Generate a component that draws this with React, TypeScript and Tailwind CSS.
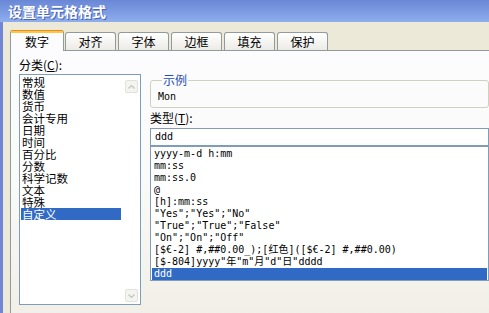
import React from "react";

const CATEGORIES = [
  "常规",
  "数值",
  "货币",
  "会计专用",
  "日期",
  "时间",
  "百分比",
  "分数",
  "科学记数",
  "文本",
  "特殊",
  "自定义",
];

const FORMATS = [
  "yyyy-m-d h:mm",
  "mm:ss",
  "mm:ss.0",
  "@",
  "[h]:mm:ss",
  '"Yes";"Yes";"No"',
  '"True";"True";"False"',
  '"On";"On";"Off"',
  "[$€-2] #,##0.00_);[红色]([$€-2] #,##0.00)",
  '[$-804]yyyy"年"m"月"d"日"dddd',
  "ddd",
];

const TABS = ["数字", "对齐", "字体", "边框", "填充", "保护"];

const cjk = "font-['Noto_Sans_CJK_SC','Noto_Sans',sans-serif]";
const mono = "font-['DejaVu_Sans_Mono','Noto_Sans_CJK_SC',monospace] text-[10px]";

function ScrollButton({ up }: { up?: boolean }) {
  return (
    <div className="w-[13px] h-[13px] rounded-[2px] border border-[#E2E2DA] bg-[#F4F4F0] flex items-center justify-center">
      <svg width="7" height="4" viewBox="0 0 7 4">
        <path
          d={up ? "M0.5 3.5 L3.5 0.5 L6.5 3.5" : "M0.5 0.5 L3.5 3.5 L6.5 0.5"}
          fill="none"
          stroke="#C9C9C0"
          strokeWidth="1.4"
        />
      </svg>
    </div>
  );
}

export default function App() {
  return (
    <div className={`w-[489px] h-[313px] overflow-hidden flex flex-col bg-[#ECE9D8] ${cjk}`}>
      {/* Title bar */}
      <div className="h-[22px] shrink-0 bg-gradient-to-b from-[#6A87D6] via-[#7B9AE2] to-[#8EAEEE] flex items-center pl-[8px]">
        <span className="text-white font-bold text-[14px] leading-none [text-shadow:1px_1px_0_#4A63B0]">
          设置单元格格式
        </span>
      </div>

      <div className="flex flex-1 min-h-0">
        {/* window frame */}
        <div className="w-[3px] shrink-0 bg-[#7186D6]" />

        <div className="flex-1 flex flex-col pl-[7px] pt-[8px] min-w-0">
          {/* Tabs */}
          <div className="flex items-end h-[21px] shrink-0 relative z-10">
            {TABS.map((t, i) =>
              i === 0 ? (
                <div
                  key={t}
                  className="w-[54px] h-[21px] mr-[1px] bg-[#FCFCFE] border-x border-[#919B9C] rounded-t-[3px] flex flex-col"
                >
                  <div className="h-[1px] bg-[#E68B2C] rounded-t-[3px]" />
                  <div className="h-[2px] bg-[#FFC73C]" />
                  <div className="flex-1 flex items-center justify-center text-[12px] leading-none text-black pb-[1px]">
                    {t}
                  </div>
                </div>
              ) : (
                <div
                  key={t}
                  className="w-[51px] h-[18px] mr-[2px] mb-[1px] border-x border-t border-[#919B9C] rounded-t-[3px] bg-gradient-to-b from-[#FFFFFF] to-[#ECEBE6] flex items-center justify-center text-[12px] leading-none text-black"
                >
                  {t}
                </div>
              )
            )}
          </div>

          {/* Panel */}
          <div className="flex-1 -mt-[1px] border-l border-t border-[#919B9C] bg-gradient-to-b from-[#FCFCFE] via-[#FAFAF8] to-[#F1EFE7] flex pl-[8px] pt-[6px]">
            {/* Left: category */}
            <div className="w-[122px] shrink-0 flex flex-col">
              <div className="h-[16px] text-[12px] leading-[16px] text-black">
                分类(<u>C</u>):
              </div>
              <div className="mt-[1px] h-[231px] border border-[#7F9DB9] bg-white flex p-[1px]">
                <div className="flex-1 flex flex-col">
                  {CATEGORIES.map((c) => (
                    <div
                      key={c}
                      className={`h-[12px] text-[11.5px] leading-[12px] pl-[1px] ${
                        c === "自定义" ? "bg-[#316AC5] text-white" : "text-black"
                      }`}
                    >
                      {c}
                    </div>
                  ))}
                </div>
                <div className="w-[18px] flex flex-col justify-between items-center pt-[4px] pb-[1px] pl-[2px]">
                  <ScrollButton up />
                  <ScrollButton />
                </div>
              </div>
            </div>

            {/* Right: sample + type */}
            <div className="flex-1 ml-[9px] flex flex-col min-w-0">
              <fieldset className="mt-[16px] h-[35px] border border-[#D0D0BF] rounded-[3px] pl-[7px]">
                <legend className="ml-[4px] px-[1px] text-[12px] leading-[14px] text-[#1D4FB8]">
                  示例
                </legend>
                <div className={`${mono} leading-[12px] text-black mt-[4px]`}>Mon</div>
              </fieldset>

              <div className="mt-[2px] h-[16px] text-[12px] leading-[16px] text-black">
                类型(<u>T</u>):
              </div>

              <div className="mt-[2px] h-[18px] border border-[#7F9DB9] bg-white flex items-center pl-[4px]">
                <span className={`${mono} leading-[12px] text-black`}>ddd</span>
              </div>

              <div className="h-[135px] border border-[#7F9DB9] bg-white p-[1px] flex flex-col">
                {FORMATS.map((f) => (
                  <div
                    key={f}
                    className={`h-[12px] ${mono} leading-[12px] pl-[2px] whitespace-pre ${
                      f === "ddd" ? "bg-[#316AC5] text-white" : "text-black"
                    }`}
                  >
                    {f}
                  </div>
                ))}
              </div>
            </div>
          </div>
        </div>
      </div>
    </div>
  );
}
